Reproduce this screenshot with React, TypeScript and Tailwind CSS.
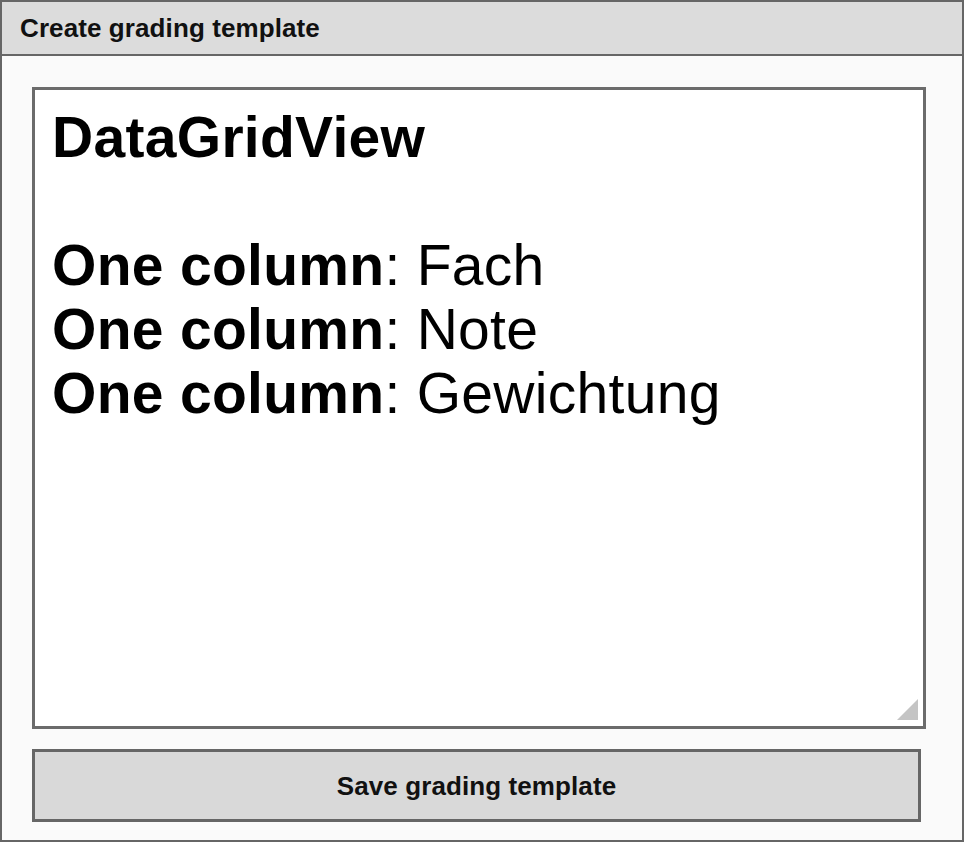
import React from "react";

const rows = ["Fach", "Note", "Gewichtung"];

const App = () => {
  return (
    <div
      className="w-[964px] h-[842px] border-2 border-[#666666] bg-[#fafafa] flex flex-col text-[#111111]"
      style={{ fontFamily: '"Liberation Sans", Arial, sans-serif' }}
    >
      {/* title bar */}
      <div className="h-[54px] shrink-0 bg-[#dcdcdc] border-b-2 border-[#666666] px-[18px] flex items-center">
        <span className="text-[26px] font-bold leading-none tracking-[0.1px]">Create grading template</span>
      </div>

      <div className="flex flex-col px-[30px] pt-[31px]">
        {/* text area */}
        <div className="relative w-[894px] h-[642px] bg-white border-[3px] border-[#6b6b6b] pl-[17px] pt-[15px]">
          <div className="text-[57px] leading-[64px] text-black tracking-[0.3px]">
            <div className="font-bold">DataGridView</div>
            <div>&nbsp;</div>
            {rows.map((r) => (
              <div key={r}>
                <span className="font-bold">One column</span>: {r}
              </div>
            ))}
          </div>
          <svg className="absolute right-[5px] bottom-[6px]" width="21" height="21" viewBox="0 0 21 21">
            <polygon points="21,0 21,21 0,21" fill="#c4c4c4" />
          </svg>
        </div>

        {/* save button */}
        <button className="mt-[20px] w-[889px] h-[73px] bg-[#d9d9d9] border-[3px] border-[#666666] text-[26px] font-bold leading-none tracking-[0.1px] cursor-pointer">
          Save grading template
        </button>
      </div>
    </div>
  );
};

export default App;
